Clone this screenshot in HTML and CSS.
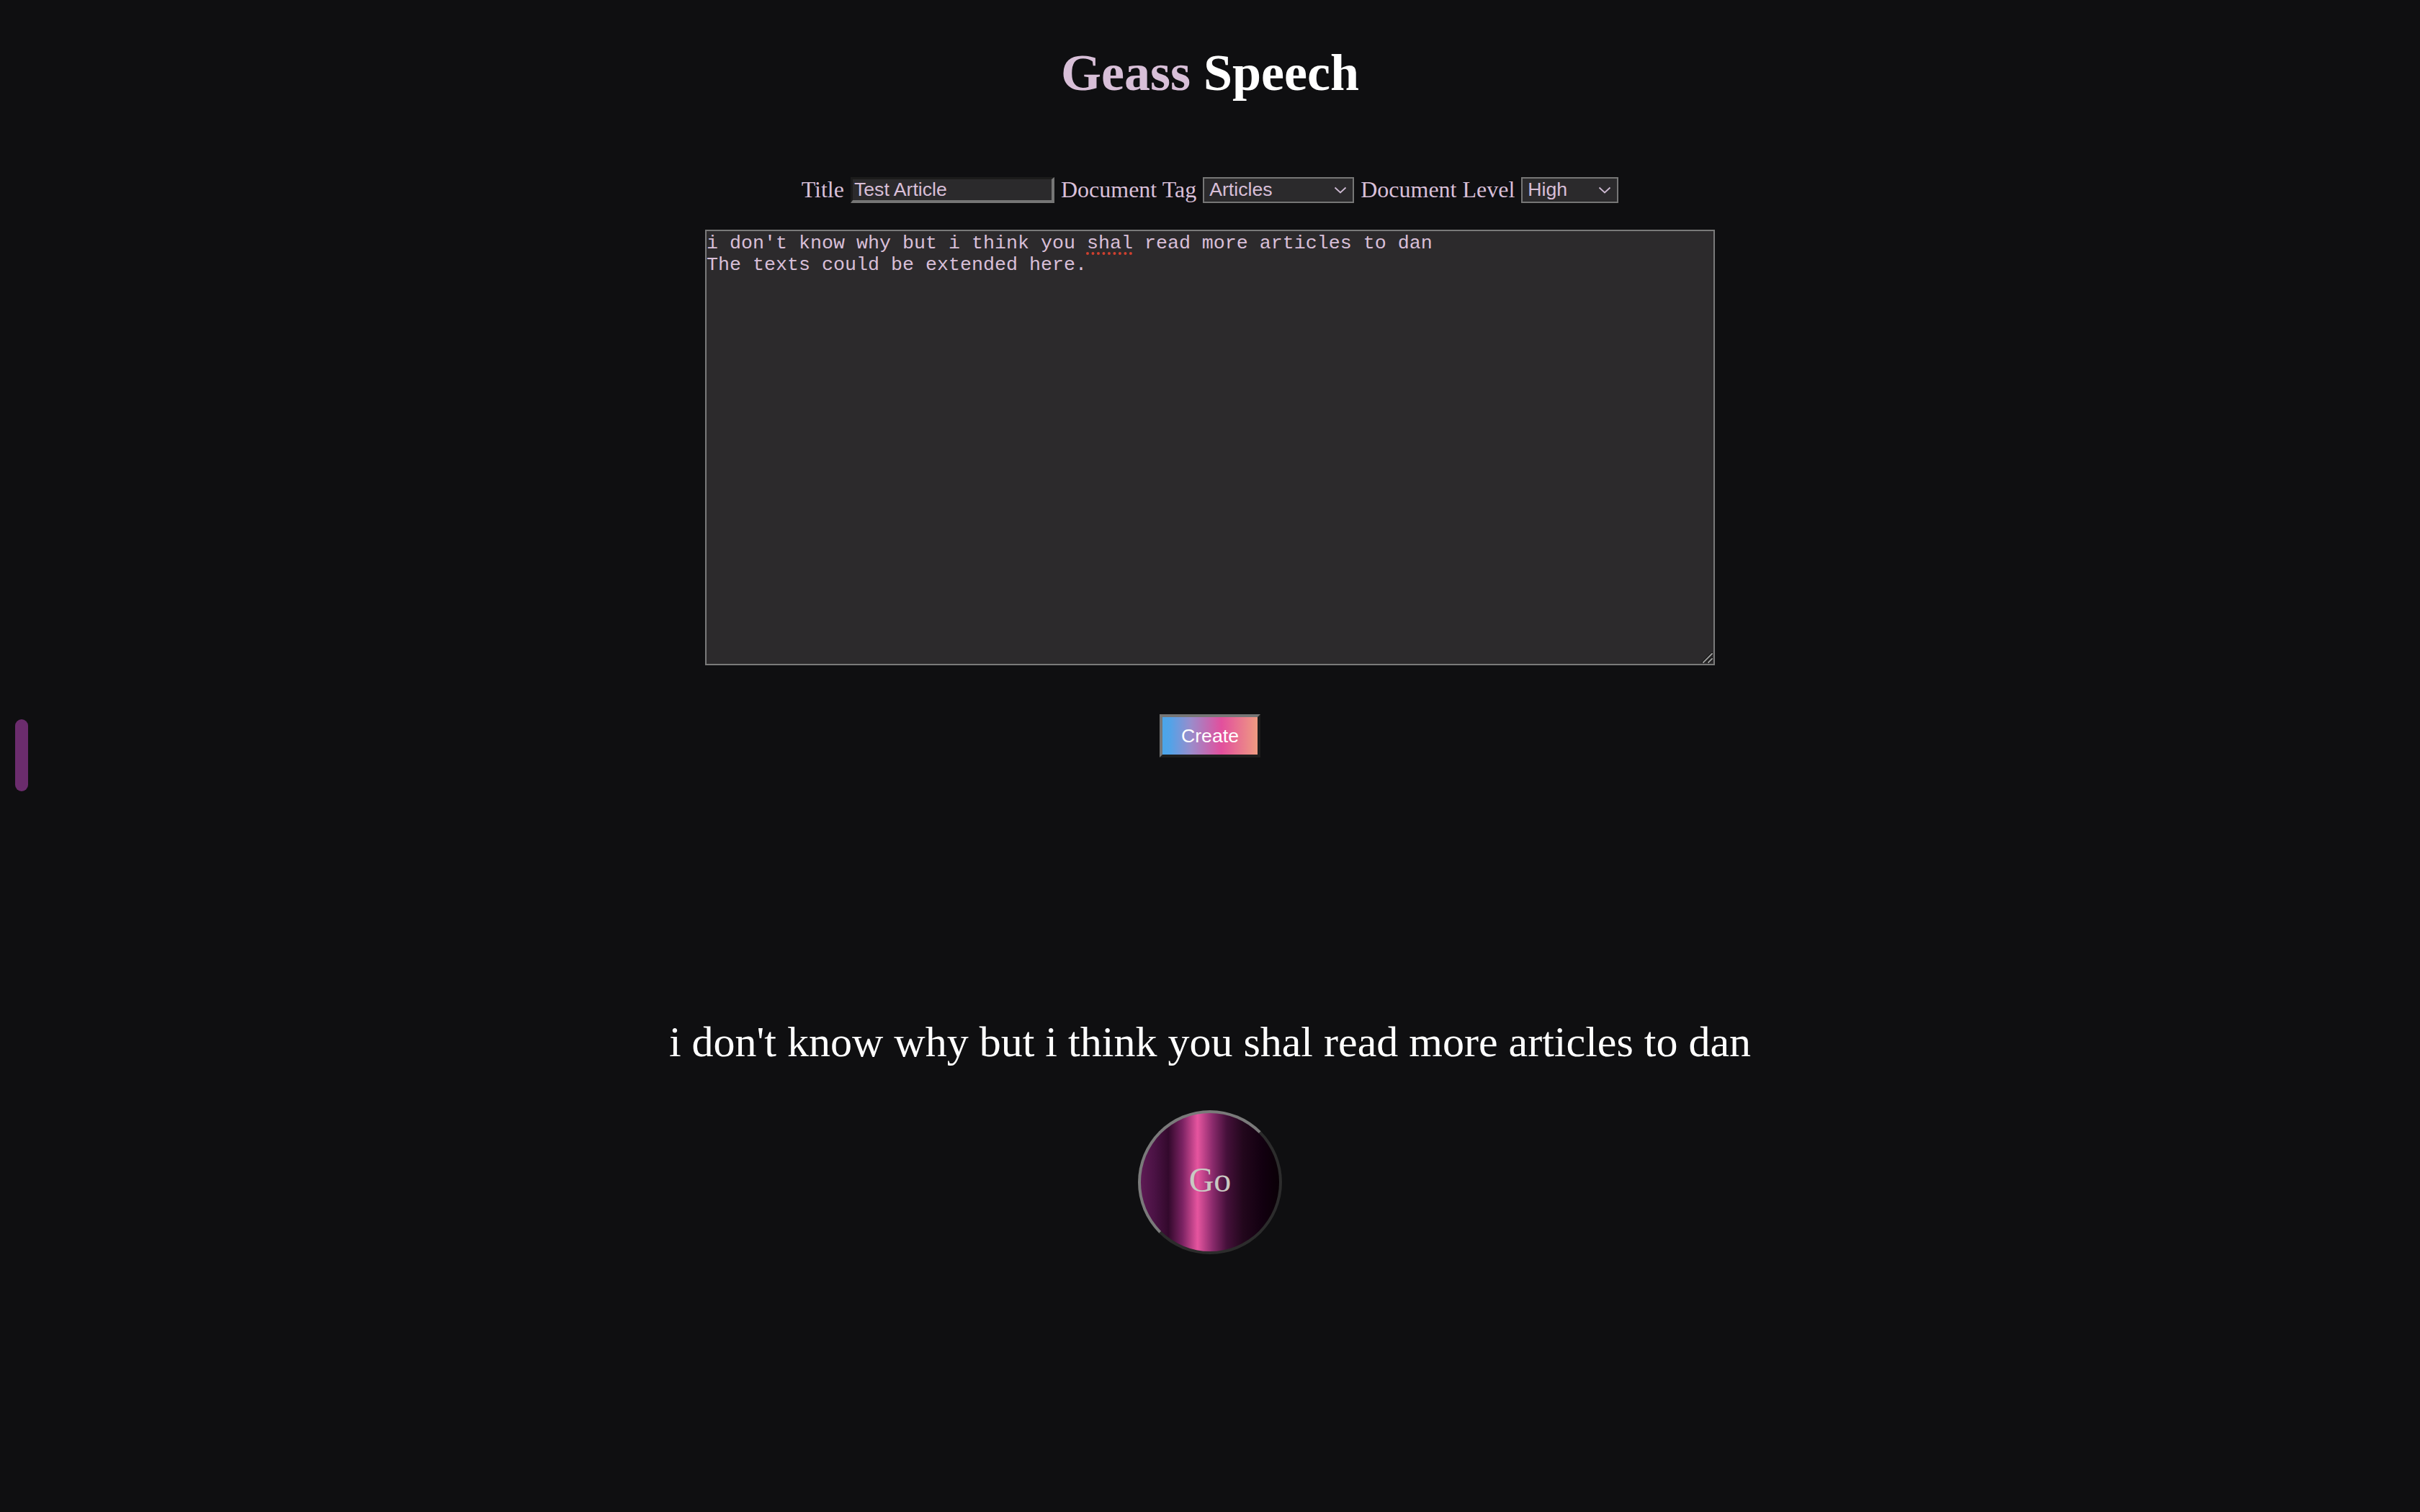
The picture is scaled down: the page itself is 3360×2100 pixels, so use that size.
FILE: index.html
```html
<!DOCTYPE html>
<html lang="en">
<head>
<meta charset="utf-8">
<title>Geass Speech</title>
<link rel="stylesheet" href="styles.css">
</head>
<body>
<div class="scroll-pill"></div>
<main class="page">
  <h1 class="title"><span class="title-a">Geass</span> <span class="title-b">Speech</span></h1>

  <div class="form-row">
    <label class="label">Title</label>
    <div class="text-input">Test Article</div>
    <label class="label">Document Tag</label>
    <div class="select select-tag"><span>Articles</span><svg class="chev" viewBox="0 0 18 10" width="18" height="10"><path d="M1.5 1.5 L9 8.5 L16.5 1.5" fill="none" stroke="#cdbad2" stroke-width="1.8"/></svg></div>
    <label class="label">Document Level</label>
    <div class="select select-level"><span>High</span><svg class="chev" viewBox="0 0 18 10" width="18" height="10"><path d="M1.5 1.5 L9 8.5 L16.5 1.5" fill="none" stroke="#cdbad2" stroke-width="1.8"/></svg></div>
  </div>

  <div class="editor-wrap">
    <div class="editor">i don't know why but i think you <span class="misspelled">shal</span> read more articles to dan
The texts could be extended here.</div>
    <svg class="resizer" viewBox="0 0 16 16" width="16" height="16">
      <path d="M3 15 L15 3" stroke="#111" stroke-width="4" stroke-linecap="round"/>
      <path d="M3 15 L15 3" stroke="#9a9a9a" stroke-width="2" stroke-linecap="round"/>
      <path d="M10 15 L15 10" stroke="#111" stroke-width="4" stroke-linecap="round"/>
      <path d="M10 15 L15 10" stroke="#9a9a9a" stroke-width="2" stroke-linecap="round"/>
    </svg>
  </div>

  <button class="create-btn">Create</button>

  <p class="sentence">i don't know why but i think you shal read more articles to dan</p>

  <button class="go-btn">Go</button>
</main>
</body>
</html>
```

FILE: styles.css
```css
html, body {
  margin: 0;
  padding: 0;
  background: #0f0f11;
}

body {
  font-family: "Liberation Serif", "Times New Roman", serif;
  color: #d8bfd8;
  min-height: 2100px;
}

.page {
  display: flex;
  flex-direction: column;
  align-items: center;
}

.title {
  margin: 60px 0 0;
  font-size: 72px;
  line-height: 83px;
  font-weight: bold;
}

.title-a { color: #d8bfd8; }
.title-b { color: #ffffff; }

.form-row {
  margin-top: 102px;
  display: flex;
  align-items: center;
  gap: 9px;
  height: 37px;
}

.label {
  font-size: 32px;
  line-height: 37px;
  color: #d8bfd8;
}

.text-input,
.select {
  box-sizing: border-box;
  height: 36px;
  background: #2b2a2c;
  font-family: "Liberation Sans", Arial, sans-serif;
  font-size: 26.67px;
  color: #d8bfd8;
  display: flex;
  align-items: center;
}

.text-input {
  width: 283px;
  padding: 0 2px;
  border-style: solid;
  border-width: 3px 4px 4px 3px;
  border-color: #1b1b1b #767676 #767676 #1b1b1b;
}

.select {
  border: 2px solid #767676;
  padding: 0 8px 0 7px;
  justify-content: space-between;
}

.select-tag { width: 210px; }
.select-level { width: 135px; }

.chev { flex: none; }

.editor-wrap {
  position: relative;
  margin-top: 37px;
  width: 1402px;
  height: 605px;
}

.editor {
  box-sizing: border-box;
  width: 100%;
  height: 100%;
  border: 2px solid #7a7a7a;
  background: #2c2a2c;
  padding: 2px 2px 2px 0;
  font-family: "Liberation Mono", "Courier New", monospace;
  font-size: 26.67px;
  line-height: 30px;
  color: #d8bfd8;
  white-space: pre-wrap;
  overflow: hidden;
}

.resizer {
  position: absolute;
  right: 3px;
  bottom: 3px;
}

.misspelled {
  text-decoration: underline dotted #d0402f;
  text-decoration-thickness: 4px;
  text-underline-offset: 5px;
}

.create-btn {
  box-sizing: border-box;
  margin-top: 68px;
  width: 140px;
  height: 60px;
  border-style: solid;
  border-width: 4px;
  border-color: #767676 #1e1e1e #1e1e1e #767676;
  background: linear-gradient(to right, #4aa6ea 0%, #52a3e8 8%, #9a8ccb 30%, #e24f9d 62%, #ef9b82 100%);
  font-family: "Liberation Sans", Arial, sans-serif;
  font-size: 26.67px;
  color: #ffffff;
  padding: 0;
}

.sentence {
  margin: 361px 0 0;
  font-size: 60px;
  line-height: 69px;
  color: #ffffff;
}

.go-btn {
  box-sizing: border-box;
  margin-top: 60px;
  width: 200px;
  height: 200px;
  border-radius: 50%;
  border-style: solid;
  border-width: 4px;
  border-color: #7a7a7a #2c2c2c #2c2c2c #7a7a7a;
  background: linear-gradient(to right,
    #5e1a54 0%, #4a1244 10%, #33092c 20%, #7a2262 30%,
    #e6559f 41%, #8a2a6c 52%, #45103a 62%, #22071c 74%, #120010 88%, #0a0006 100%);
  font-family: "Liberation Serif", "Times New Roman", serif;
  font-size: 48px;
  line-height: 1;
  color: #c9c9c3;
  padding: 0 0 6px;
}

.scroll-pill {
  position: fixed;
  left: 21px;
  top: 999px;
  width: 18px;
  height: 100px;
  border-radius: 9px;
  background: #6b2c6d;
}
```
